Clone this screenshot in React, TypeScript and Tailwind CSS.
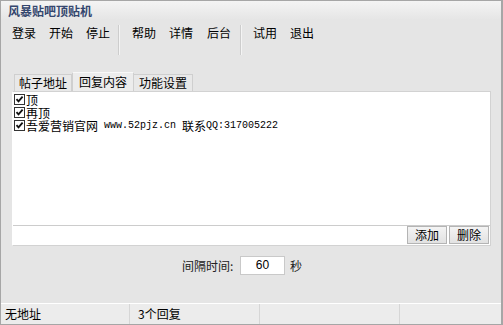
import React from "react";

const cjk = { fontFamily: '"Noto Sans CJK SC", "Liberation Sans", sans-serif' };
const mono = { fontFamily: '"Liberation Mono", "Noto Sans CJK SC", monospace' };

function Check() {
  return (
    <span className="inline-flex w-[11px] h-[11px] border border-[#333] bg-white items-center justify-center mr-[1px] shrink-0">
      <svg width="9" height="9" viewBox="0 0 9 9">
        <path d="M1.5 4.2 L3.5 6.4 L7.6 1.6" stroke="#111" strokeWidth="1.8" fill="none" />
      </svg>
    </span>
  );
}

function ToolBtn({ label, ml }: { label: string; ml: string }) {
  return <div className={`text-[12px] leading-[16px] text-black ${ml}`}>{label}</div>;
}

function Sep({ ml }: { ml: string }) {
  return <div className={`w-[2px] h-[30px] border-l border-l-[#cdcdcd] border-r border-r-[#f4f4f4] ${ml}`} />;
}

export default function App() {
  return (
    <div
      className="w-[503px] h-[325px] bg-[#e5e5e5] border border-[#a6a6a6] border-r-[2px] flex flex-col overflow-hidden"
      style={cjk}
    >
      {/* title */}
      <div className="h-[19px] bg-gradient-to-b from-[#f4f4f4] to-[#e5e5e5] pl-[7px] flex items-center">
        <span className="text-[12px] font-bold text-[#34466e] leading-[14px]">风暴贴吧顶贴机</span>
      </div>
      {/* toolbar */}
      <div className="h-[38px] flex items-start pl-[11px] pt-[5px]">
        <ToolBtn label="登录" ml="" />
        <ToolBtn label="开始" ml="ml-[13px]" />
        <ToolBtn label="停止" ml="ml-[13px]" />
        <Sep ml="ml-[8px]" />
        <ToolBtn label="帮助" ml="ml-[12px]" />
        <ToolBtn label="详情" ml="ml-[13px]" />
        <ToolBtn label="后台" ml="ml-[14px]" />
        <Sep ml="ml-[9px]" />
        <ToolBtn label="试用" ml="ml-[11px]" />
        <ToolBtn label="退出" ml="ml-[13px]" />
      </div>
      {/* tabs */}
      <div className="mt-[14px] ml-[13px] flex items-end h-[19px]">
        <div className="w-[58px] h-[17px] border border-b-0 border-[#cfcfcf] bg-[#e8e8e8] text-[12px] leading-[16px] text-center text-black">
          帖子地址
        </div>
        <div className="w-[62px] h-[19px] border border-b-0 border-[#cfcfcf] border-t-[#f8f8f8] bg-[#ececec] text-[12px] leading-[18px] text-center text-black">
          回复内容
        </div>
        <div className="w-[59px] h-[17px] border border-b-0 border-l-0 border-[#cfcfcf] bg-[#e8e8e8] text-[12px] leading-[16px] text-center text-black">
          功能设置
        </div>
      </div>
      {/* panel */}
      <div className="ml-[11px] w-[479px] h-[155px] border border-[#d2d2d2] border-l-white flex flex-col">
        <div className="flex-1 bg-white border-b border-[#cccccc] pt-[1px] pl-[1px] text-[12px] text-black">
          <div className="flex items-center h-[13px] leading-[13px]">
            <Check />
            <span>顶</span>
          </div>
          <div className="flex items-center h-[13px] leading-[13px]">
            <Check />
            <span>再顶</span>
          </div>
          <div className="flex items-center h-[13px] leading-[13px] whitespace-pre">
            <Check />
            <span>吾爱营销官网</span>
            <span className="text-[10px]" style={mono}> www.52pjz.cn </span>
            <span>联系</span>
            <span className="text-[10px]" style={mono}>QQ:317005222</span>
          </div>
        </div>
        <div className="h-[19px] flex bg-white">
          <div className="flex-1" />
          <button className="w-[40px] h-[18px] border border-[#b4b4b4] bg-gradient-to-b from-[#f4f4f4] to-[#e2e2e2] text-[12px] leading-[16px] text-black">
            添加
          </button>
          <button className="ml-[2px] w-[40px] h-[18px] border border-[#b4b4b4] bg-gradient-to-b from-[#f4f4f4] to-[#e2e2e2] text-[12px] leading-[16px] text-black">
            删除
          </button>
          <div className="w-[1px]" />
        </div>
      </div>
      {/* interval */}
      <div className="mt-[10px] flex items-center h-[19px] pl-[181px]">
        <span className="text-[12px] text-[#222] w-[58px]">间隔时间:</span>
        <div className="w-[45px] h-[19px] bg-white border border-[#c9c9c9] text-[12px] leading-[17px] text-center text-black" style={{ fontFamily: '"Liberation Sans", sans-serif' }}>
          60
        </div>
        <span className="ml-[5px] text-[12px] text-[#222]">秒</span>
      </div>
      <div className="flex-1" />
      {/* status */}
      <div className="h-[21px] border-t border-white bg-[#ececec] flex items-center text-[12px] text-black">
        <div className="w-[129px] pl-[4px] h-full flex items-center border-r border-[#d6d6d6]">无地址</div>
        <div className="w-[130px] pl-[8px] h-full flex items-center border-r border-[#d6d6d6]">3个回复</div>
        <div className="w-[140px] h-full border-r border-[#d6d6d6]" />
        <div className="flex-1" />
      </div>
    </div>
  );
}
